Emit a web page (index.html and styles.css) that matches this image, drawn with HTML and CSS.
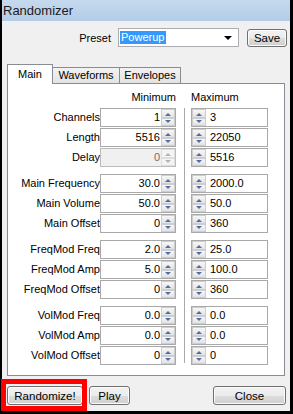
FILE: index.html
```html
<!DOCTYPE html>
<html lang="en">
<head>
    <meta charset="UTF-8">
    <meta name="viewport" content="width=device-width, initial-scale=1.0">
    <title>Randomizer</title>
    <link rel="stylesheet" href="styles.css">
</head>
<body>
    <div class="window">
        <div class="titlebar">Randomizer</div>

        <!-- Preset selector -->
        <div class="preset-row">
            <span class="preset-label">Preset</span>
            <div class="combo">
                <span class="combo-value">Powerup</span>
                <span class="combo-arrow"></span>
            </div>
            <button class="btn btn-save">Save</button>
        </div>

        <!-- Tabs -->
        <div class="tabs">
            <div class="tab active tab-main">Main</div>
            <div class="tab tab-wave">Waveforms</div>
            <div class="tab tab-env">Envelopes</div>
        </div>

        <div class="panel">
            <div class="row head">
                <span></span>
                <span class="head-min">Minimum</span>
                <span></span>
                <span class="head-max">Maximum</span>
            </div>

            <div class="rows">
                <div class="group">
                    <div class="row">
                        <label>Channels</label>
                        <div class="field min"><span class="val">1</span><span class="spin"><i class="up"></i><i class="down"></i></span></div>
                        <span></span>
                        <div class="field max"><span class="spin"><i class="up"></i><i class="down"></i></span><span class="val">3</span></div>
                    </div>
                    <div class="row">
                        <label>Length</label>
                        <div class="field min"><span class="val">5516</span><span class="spin"><i class="up"></i><i class="down"></i></span></div>
                        <span></span>
                        <div class="field max"><span class="spin"><i class="up"></i><i class="down"></i></span><span class="val">22050</span></div>
                    </div>
                    <div class="row">
                        <label>Delay</label>
                        <div class="field min disabled"><span class="val">0</span><span class="spin"><i class="up"></i><i class="down"></i></span></div>
                        <span></span>
                        <div class="field max"><span class="spin"><i class="up"></i><i class="down"></i></span><span class="val">5516</span></div>
                    </div>
                </div>

                <div class="group">
                    <div class="row">
                        <label>Main Frequency</label>
                        <div class="field min"><span class="val">30.0</span><span class="spin"><i class="up"></i><i class="down"></i></span></div>
                        <span></span>
                        <div class="field max"><span class="spin"><i class="up"></i><i class="down"></i></span><span class="val">2000.0</span></div>
                    </div>
                    <div class="row">
                        <label>Main Volume</label>
                        <div class="field min"><span class="val">50.0</span><span class="spin"><i class="up"></i><i class="down"></i></span></div>
                        <span></span>
                        <div class="field max"><span class="spin"><i class="up"></i><i class="down"></i></span><span class="val">50.0</span></div>
                    </div>
                    <div class="row">
                        <label>Main Offset</label>
                        <div class="field min"><span class="val">0</span><span class="spin"><i class="up"></i><i class="down"></i></span></div>
                        <span></span>
                        <div class="field max"><span class="spin"><i class="up"></i><i class="down"></i></span><span class="val">360</span></div>
                    </div>
                </div>

                <div class="group">
                    <div class="row">
                        <label>FreqMod Freq</label>
                        <div class="field min"><span class="val">2.0</span><span class="spin"><i class="up"></i><i class="down"></i></span></div>
                        <span></span>
                        <div class="field max"><span class="spin"><i class="up"></i><i class="down"></i></span><span class="val">25.0</span></div>
                    </div>
                    <div class="row">
                        <label>FreqMod Amp</label>
                        <div class="field min"><span class="val">5.0</span><span class="spin"><i class="up"></i><i class="down"></i></span></div>
                        <span></span>
                        <div class="field max"><span class="spin"><i class="up"></i><i class="down"></i></span><span class="val">100.0</span></div>
                    </div>
                    <div class="row">
                        <label>FreqMod Offset</label>
                        <div class="field min"><span class="val">0</span><span class="spin"><i class="up"></i><i class="down"></i></span></div>
                        <span></span>
                        <div class="field max"><span class="spin"><i class="up"></i><i class="down"></i></span><span class="val">360</span></div>
                    </div>
                </div>

                <div class="group">
                    <div class="row">
                        <label>VolMod Freq</label>
                        <div class="field min"><span class="val">0.0</span><span class="spin"><i class="up"></i><i class="down"></i></span></div>
                        <span></span>
                        <div class="field max"><span class="spin"><i class="up"></i><i class="down"></i></span><span class="val">0.0</span></div>
                    </div>
                    <div class="row">
                        <label>VolMod Amp</label>
                        <div class="field min"><span class="val">0.0</span><span class="spin"><i class="up"></i><i class="down"></i></span></div>
                        <span></span>
                        <div class="field max"><span class="spin"><i class="up"></i><i class="down"></i></span><span class="val">0.0</span></div>
                    </div>
                    <div class="row">
                        <label>VolMod Offset</label>
                        <div class="field min"><span class="val">0</span><span class="spin"><i class="up"></i><i class="down"></i></span></div>
                        <span></span>
                        <div class="field max"><span class="spin"><i class="up"></i><i class="down"></i></span><span class="val">0</span></div>
                    </div>
                </div>
            </div>
        </div>

        <!-- Bottom buttons -->
        <div class="footer">
            <button class="btn btn-random">Randomize!</button>
            <button class="btn btn-play">Play</button>
            <button class="btn btn-close">Close</button>
        </div>

        <!-- Red annotation box -->
        <div class="highlight"></div>
    </div>
</body>
</html>
```

FILE: styles.css
```css
body {
    margin: 0;
    background-color: #f0f0f0;
    font-family: "Liberation Sans", Arial, sans-serif;
    font-size: 11px;
    color: #000;
}

/* Window frame */
.window {
    position: relative;
    width: 293px;
    height: 414px;
    box-sizing: border-box;
    border-left: 2px solid #000;
    border-right: 3px solid #000;
    border-bottom: 3px solid #000;
    background-color: #f0f0f0;
}

.titlebar {
    height: 21px;
    line-height: 21px;
    padding-left: 1px;
    font-size: 13px;
    color: #1a1a1a;
    background: linear-gradient(#c6daee, #b3cce7);
}

/* Preset row */
.preset-row {
    display: flex;
    align-items: center;
    justify-content: flex-end;
    height: 19px;
    margin-top: 7px;
    padding-right: 3px;
}

.preset-label {
    margin-right: 7px;
}

.combo {
    display: flex;
    align-items: center;
    width: 121px;
    height: 19px;
    box-sizing: border-box;
    border: 1px solid #abadb3;
    background: #fff;
    padding: 0 2px 0 1px;
}

.combo-value {
    background: #3399ff;
    color: #fff;
    height: 13px;
    line-height: 13px;
    padding: 0 2px 0 1px;
}

.combo-arrow {
    margin-left: auto;
    margin-right: 4px;
    border-left: 4px solid transparent;
    border-right: 4px solid transparent;
    border-top: 4px solid #000;
}

.btn {
    font-family: "Liberation Sans", Arial, sans-serif;
    font-size: 11.5px;
    color: #000;
    height: 19px;
    padding: 0;
    border: 1px solid #707070;
    border-radius: 3px;
    background: linear-gradient(#f2f2f2 0%, #ebebeb 50%, #dddddd 51%, #cfcfcf 100%);
    box-shadow: inset 0 0 0 1px #fbfbfb;
}

.btn-save {
    width: 40px;
    height: 18px;
    margin-left: 8px;
}

/* Tabs */
.tabs {
    position: relative;
    z-index: 1;
    display: flex;
    align-items: flex-end;
    height: 20px;
    margin: 17px 0 -1px 5px;
}

.tab {
    height: 16px;
    line-height: 15px;
    box-sizing: border-box;
    margin-bottom: 1px;
    margin-left: -1px;
    border: 1px solid #898c95;
    border-bottom: none;
    text-align: center;
    background: linear-gradient(#f2f2f2, #e3e3e3);
}

.tab.active {
    height: 20px;
    line-height: 18px;
    margin-bottom: 0;
    margin-left: 0;
    background: #fff;
}

.tab-main { width: 46px; }
.tab-wave { width: 68px; }
.tab-env { width: 62px; }

/* Tab panel */
.panel {
    width: 278px;
    height: 293px;
    box-sizing: border-box;
    margin-left: 5px;
    padding-top: 5px;
    border: 1px solid #898c95;
    background: #fff;
}

.row {
    display: grid;
    grid-template-columns: 92px 76px 15px 77px;
    height: 19px;
}

.row.head {
    height: 17px;
    line-height: 17px;
    margin-bottom: 2px;
}

.head-min {
    text-align: right;
}

.rows {
    display: flex;
    flex-direction: column;
    gap: 7px;
    background: linear-gradient(#a9a9a9, #a9a9a9) no-repeat 176px 0 / 1px 255px;
}

.group {
    display: flex;
    flex-direction: column;
    gap: 1px;
}

.row label {
    line-height: 19px;
    text-align: right;
    white-space: nowrap;
}

/* Spin boxes */
.field {
    display: flex;
    height: 19px;
    box-sizing: border-box;
    border: 1px solid #a9a9a9;
    background: #fff;
    line-height: 17px;
}

.field .val {
    flex: 1;
}

.field.min .val {
    text-align: right;
    padding-right: 1px;
}

.field.max .val {
    padding-left: 4px;
}

.field.disabled {
    background: #f0f0f0;
    border-color: #bcbcbc;
    color: #6d6d6d;
}

.spin {
    display: flex;
    flex-direction: column;
    width: 14px;
}

.spin i {
    position: relative;
    flex: 1;
    box-sizing: border-box;
    border: 1px solid #cdcdcd;
    background: linear-gradient(#f7f7f7, #e3e3e3);
}

.spin i::after {
    content: "";
    position: absolute;
    left: 3px;
    border-left: 3px solid transparent;
    border-right: 3px solid transparent;
}

.spin .up::after {
    bottom: 1px;
    border-bottom: 3px solid #4f6ea8;
}

.spin .down::after {
    top: 1px;
    border-top: 3px solid #4f6ea8;
}

.disabled .spin i {
    background: #f4f4f4;
    border-color: #dedede;
}

.disabled .spin .up::after {
    border-bottom-color: #b4b4b4;
}

.disabled .spin .down::after {
    border-top-color: #b4b4b4;
}

/* Footer buttons */
.footer {
    display: flex;
    margin-top: 10px;
    padding: 0 4px 0 5px;
}

.btn-random {
    width: 76px;
}

.btn-play {
    width: 41px;
    margin-left: 6px;
}

.btn-close {
    width: 73px;
    margin-left: auto;
}

.highlight {
    position: absolute;
    left: -1px;
    top: 379px;
    width: 86px;
    height: 32px;
    box-sizing: border-box;
    border: 5px solid #ff0000;
}
```
